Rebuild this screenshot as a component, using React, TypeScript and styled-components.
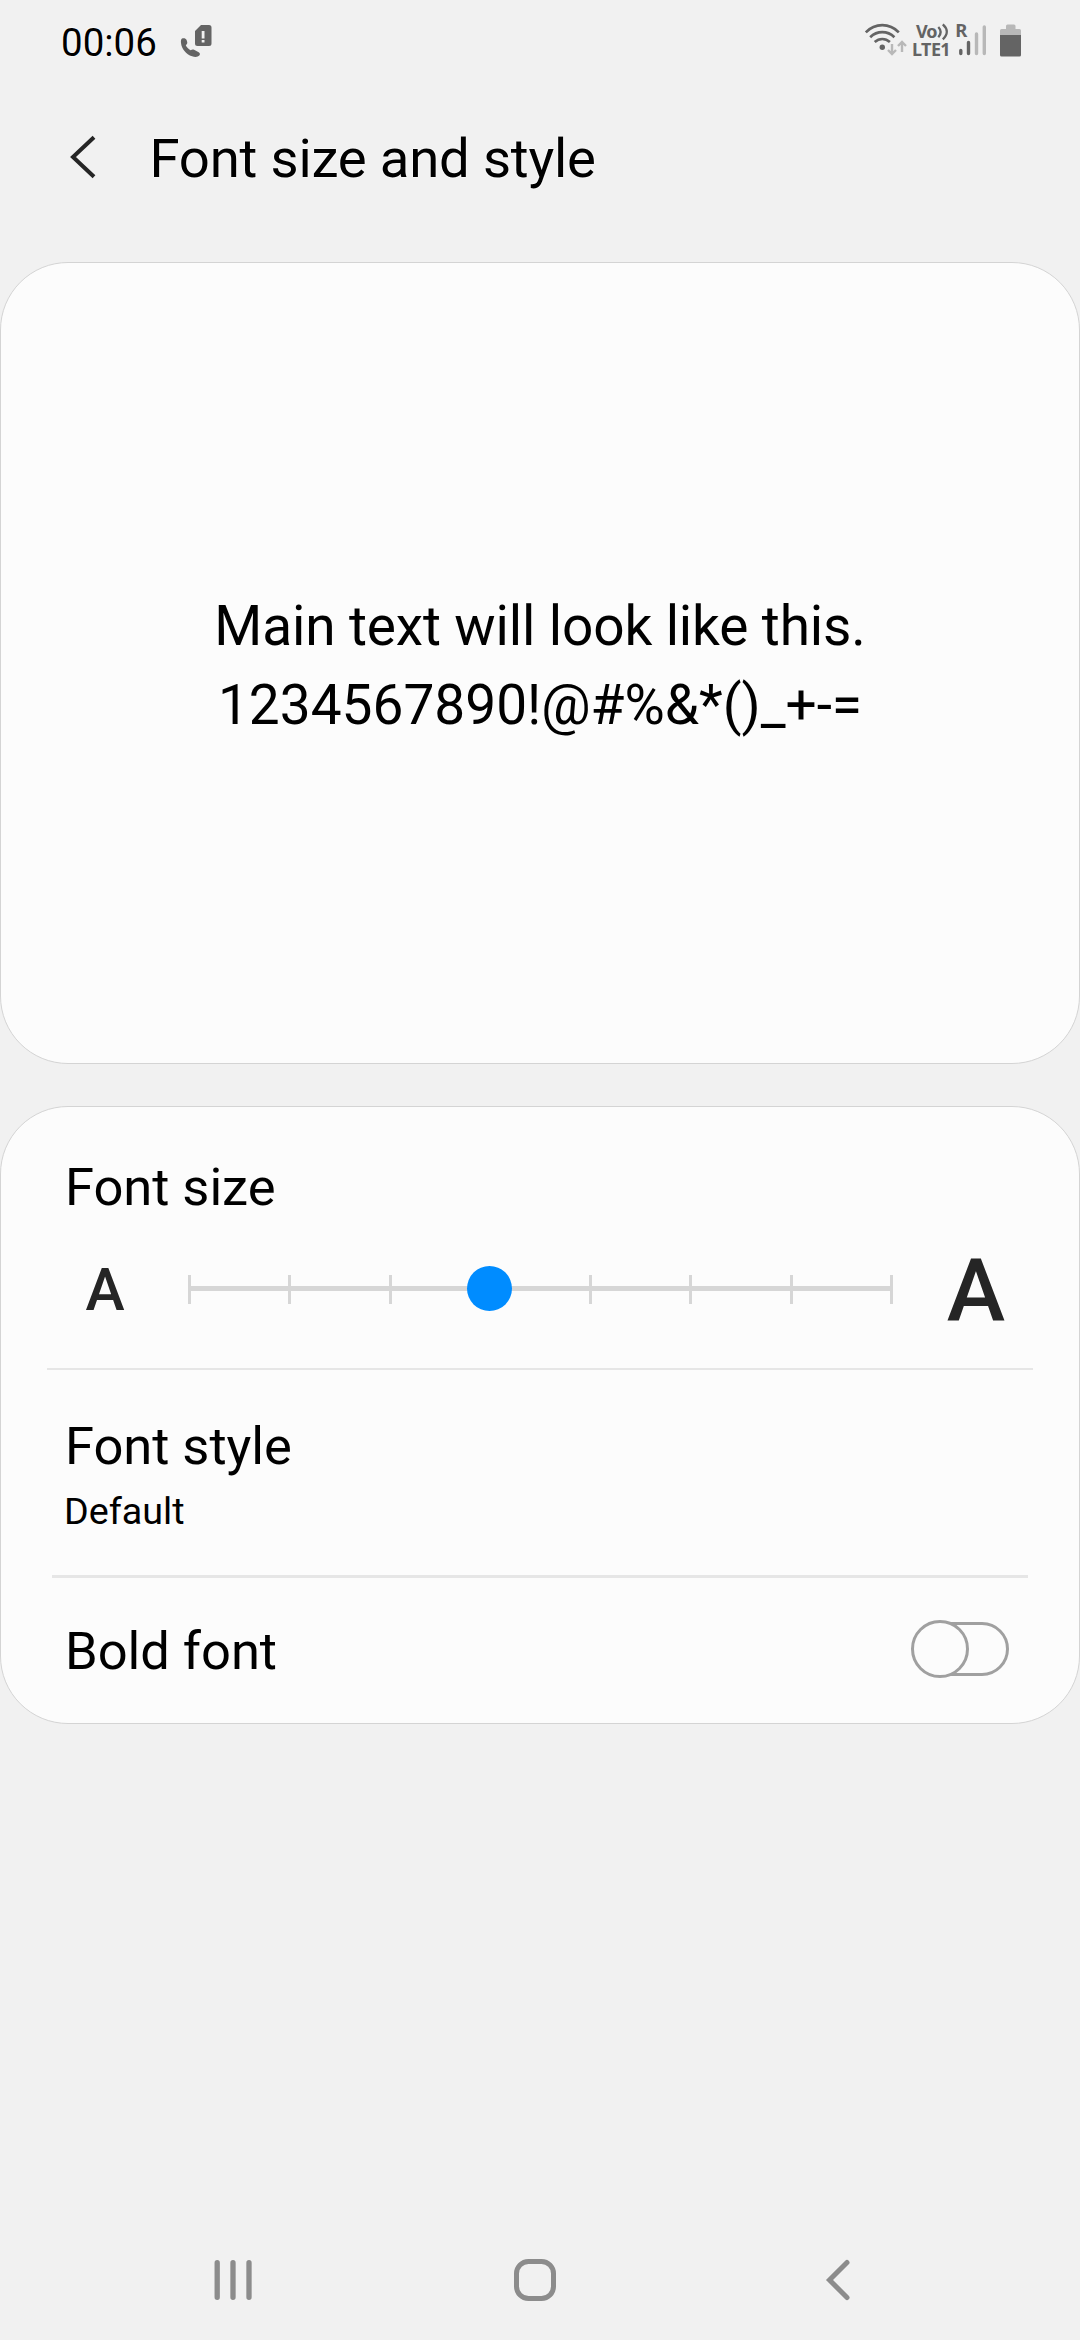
import React from "react";
import styled, { createGlobalStyle } from "styled-components";

const GlobalStyle = createGlobalStyle`
  html, body { margin: 0; background: #f1f1f1; }
  *, *::before, *::after { box-sizing: border-box; }
`;

const Screen = styled.div`
  width: 1080px;
  height: 2340px;
  display: flex;
  flex-direction: column;
  background: #f1f1f1;
  color: #000;
  font-family: Roboto, "Liberation Sans", sans-serif;
  overflow: hidden;
  white-space: nowrap;
`;

const StatusBar = styled.header`
  height: 80px;
  display: flex;
  align-items: flex-start;
  padding: 0 59px 0 61px;
`;

const Clock = styled.time`
  width: 120px;
  padding-top: 20px;
  font-size: 38.5px;
  line-height: 46px;
  text-shadow: 0 0 2px #fff, 0 0 2px #fff;
`;

const Icon = styled.svg`
  display: block;
  flex: none;
  overflow: visible;
`;

const StatusRight = styled.div`
  display: flex;
  margin-left: auto;
`;

const NetworkLabel = styled.div`
  width: 43px;
  height: 80px;
  padding-top: 22px;
  display: flex;
  flex-direction: column;
  color: #646464;
  font-family: "Noto Sans", "Open Sans", sans-serif;
  font-weight: 700;
  font-size: 18px;
  line-height: 18px;
  letter-spacing: -0.6px;
`;

const VoLine = styled.span`
  display: flex;
  padding-left: 4px;
  letter-spacing: -1px;
`;

const TitleBar = styled.div`
  height: 182px;
  display: flex;
  align-items: flex-start;
  padding: 0 0 0 64px;
`;

const Title = styled.h1`
  margin: 0;
  padding: 46px 0 0 41.5px;
  font-weight: 400;
  font-size: 54.5px;
  line-height: 64px;
  letter-spacing: -0.22px;
  text-shadow: 0 0 2px #fff, 0 0 2px #fff;
`;

const Cards = styled.main`
  display: flex;
  flex-direction: column;
  gap: 42px;
`;

const Card = styled.section<{ $height: number }>`
  height: ${(p) => p.$height}px;
  display: flex;
  flex-direction: column;
  border: 1px solid #d4d4d4;
  border-radius: 68px;
  background: #fcfcfc;
`;

const Preview = styled.div`
  padding-top: 324px;
  text-align: center;
  font-size: 55px;
  line-height: 79px;
`;

const PreviewLine = styled.div<{ $spacing: number }>`
  letter-spacing: ${(p) => p.$spacing}px;
`;

const SizeSection = styled.div`
  height: 261px;
  padding: 49px 0 0 64px;
`;

const Label = styled.div`
  font-size: 52.5px;
  line-height: 62px;
  letter-spacing: -0.05px;
`;

const SliderRow = styled.div`
  height: 83px;
  margin-top: 30px;
  display: flex;
  align-items: center;
`;

const SampleA = styled.span<{ $size: number; $width: number; $shift: number }>`
  width: ${(p) => p.$width}px;
  padding-top: ${(p) => p.$shift}px;
  color: #252525;
  font-weight: 500;
  font-size: ${(p) => p.$size}px;
  line-height: 80px;
  text-align: center;
`;

const Slider = styled.div`
  position: relative;
  width: 705px;
  height: 29px;
  margin: 0 49px 0 43px;
  display: flex;
  justify-content: space-between;
  background: linear-gradient(#d6d6d6, #d6d6d6) 0 11px / 100% 5px no-repeat;
`;

const Tick = styled.i`
  width: 3px;
  height: 29px;
  background: #d6d6d6;
`;

const Thumb = styled.i`
  position: absolute;
  top: -9px;
  left: calc(3 / 7 * 702px - 21.5px);
  width: 45px;
  height: 45px;
  border-radius: 50%;
  background: #008cff;
`;

const Divider = styled.hr<{ $inset: number; $thickness: number }>`
  flex: none;
  width: ${(p) => 1078 - 2 * p.$inset}px;
  height: ${(p) => p.$thickness}px;
  margin: 0 auto;
  border: 0;
  background: #e6e6e6;
`;

const StyleSection = styled.div`
  height: 205px;
  padding: 45px 0 0 64px;
`;

const Value = styled.div`
  margin: 11px 0 0 -1px;
  font-size: 37.7px;
  line-height: 46px;
`;

const BoldRow = styled.div`
  flex: 1;
  display: flex;
  justify-content: space-between;
  align-items: flex-start;
  padding: 42px 70px 0 64px;
`;

const Switch = styled.div`
  position: relative;
  width: 96px;
  height: 54px;
  margin-top: 2px;
  border: 3px solid #a0a0a0;
  border-radius: 27px;
`;

const Knob = styled.i`
  position: absolute;
  left: -5px;
  top: -5px;
  width: 58px;
  height: 58px;
  border: 3px solid #a0a0a0;
  border-radius: 50%;
  background: #fcfcfc;
`;

const NavBar = styled.nav`
  height: 120px;
  margin-top: auto;
  display: flex;
  align-items: center;
  justify-content: space-between;
  padding: 0 220px 0 208px;
`;

const dark = "#646464";
const light = "#b8b8b8";

const CallSimIcon = () => (
  <Icon width="34" height="80" viewBox="181 0 34 80">
    <path
      d="M182 38.6c1.8-.9 3.8-.3 4.6 1.5l.6 2c.3 1.4-.3 2.3-1.4 3.2.9 2 2.6 3.8 4.9 5 1.1-.9 2.2-1.1 3.4-.5l4.6 2.5c1.4.8 1.6 2.2.6 3.3-1.4 1.6-4.3 1.9-7.2.7-6.1-2.4-10.5-7.4-11.1-13.4-.2-1.8-.1-3.5 1-4.3z"
      fill={dark}
    />
    <path
      fillRule="evenodd"
      d="M201 25h8q2.5 0 2.5 2.5v16q0 2.5-2.5 2.5h-11.5q-2.5 0-2.5-2.5V31zM201.7 31v7.5h2.8V31zM201.7 40v2.4h2.8V40z"
      fill={dark}
    />
  </Icon>
);

const WifiIcon = () => (
  <Icon width="48" height="80" viewBox="864 0 48 80">
    <g fill="none" stroke={dark} strokeWidth="2.7">
      <path d="M865.8 32.4q7-7.2 16.5-7.2t16.5 7.2" />
      <path d="M870.2 37.2q5.200-5 12.100-5t12.100 5" />
      <path d="M874.7 42q3.400-3 7.600-3t7.600 3" />
    </g>
    <circle cx="882.3" cy="47.3" r="2.7" fill={dark} />
    <g fill="none" stroke={light} strokeWidth="2.4">
      <path d="M892 44v10M888 50l4 4 4-4" />
      <path d="M902 52V42M898 46l4-4 4 4" />
    </g>
  </Icon>
);

const VoWaves = () => (
  <Icon width="13" height="18" viewBox="0 0 13 18">
    <g fill="none" stroke={dark} strokeWidth="2.3">
      <path d="M1.3 5q4.700 5 0 10.300" />
      <path d="M5.8 2.300q8 7.300 0 15" />
    </g>
  </Icon>
);

const SignalIcon = () => (
  <Icon width="45" height="80" viewBox="955 0 45 80">
    <text x="955.3" y="37" fill={dark} fontFamily="Noto Sans, sans-serif" fontWeight="700" fontSize="18.5">
      R
    </text>
    <g strokeWidth="3.4" strokeLinecap="round">
      <path d="M960.8 50.5v3M968.5 42.5v11" stroke={dark} />
      <path d="M976.5 34v19.5M984.3 27v26.5" stroke={light} />
    </g>
  </Icon>
);

const BatteryIcon = () => (
  <Icon width="21" height="80" viewBox="1000 0 21 80">
    <path d="M1006 29v-3q0-1.5 1.5-1.5h6.5q1.5 0 1.5 1.5v3h4q1.5 0 1.5 1.5V35h-21v-4.5q0-1.5 1.5-1.5z" fill={light} />
    <path d="M1000 35h21v20q0 1.5-1.5 1.5h-18q-1.5 0-1.5-1.5z" fill={dark} />
  </Icon>
);

const ticks = Array.from({ length: 8 }, (_, i) => i);

export default function App() {
  return (
    <Screen>
      <GlobalStyle />
      <StatusBar>
        <Clock>00:06</Clock>
        <CallSimIcon />
        <StatusRight>
          <WifiIcon />
          <NetworkLabel>
            <VoLine>
              Vo
              <VoWaves />
            </VoLine>
            <span>LTE1</span>
          </NetworkLabel>
          <SignalIcon />
          <BatteryIcon />
        </StatusRight>
      </StatusBar>
      <TitleBar>
        <Icon width="44" height="160" viewBox="64 80 44 160">
          <path d="M94 137.3L73 157l21 19.7" fill="none" stroke="#252525" strokeWidth="4" />
        </Icon>
        <Title>Font size and style</Title>
      </TitleBar>
      <Cards>
        <Card $height={802}>
          <Preview>
            <PreviewLine $spacing={-0.14}>Main text will look like this.</PreviewLine>
            <PreviewLine $spacing={0}>{"1234567890!@#%&*()_+-="}</PreviewLine>
          </Preview>
        </Card>
        <Card $height={618}>
          <SizeSection>
            <Label>Font size</Label>
            <SliderRow>
              <SampleA $size={59} $width={80} $shift={1}>A</SampleA>
              <Slider>
                {ticks.map((t) => (
                  <Tick key={t} />
                ))}
                <Thumb />
              </Slider>
              <SampleA $size={88} $width={68} $shift={3}>A</SampleA>
            </SliderRow>
          </SizeSection>
          <Divider $inset={46} $thickness={2} />
          <StyleSection>
            <Label>Font style</Label>
            <Value>Default</Value>
          </StyleSection>
          <Divider $inset={51} $thickness={3} />
          <BoldRow>
            <Label>Bold font</Label>
            <Switch>
              <Knob />
            </Switch>
          </BoldRow>
        </Card>
      </Cards>
      <NavBar>
        <Icon width="50" height="60" viewBox="208 2250 50 60">
          <path d="M217.2 2262.7v34.6M233 2262.7v34.6M249 2262.7v34.6" stroke="#8c8c8c" strokeWidth="5.3" strokeLinecap="round" />
        </Icon>
        <Icon width="50" height="60" viewBox="514 2250 50 60">
          <rect x="516.5" y="2261.5" width="37" height="37" rx="12" fill="none" stroke="#8c8c8c" strokeWidth="5" />
        </Icon>
        <Icon width="40" height="60" viewBox="820 2250 40 60">
          <path d="M847 2262.5L829.5 2280l17.5 17.5" fill="none" stroke="#8c8c8c" strokeWidth="5" strokeLinecap="round" />
        </Icon>
      </NavBar>
    </Screen>
  );
}
